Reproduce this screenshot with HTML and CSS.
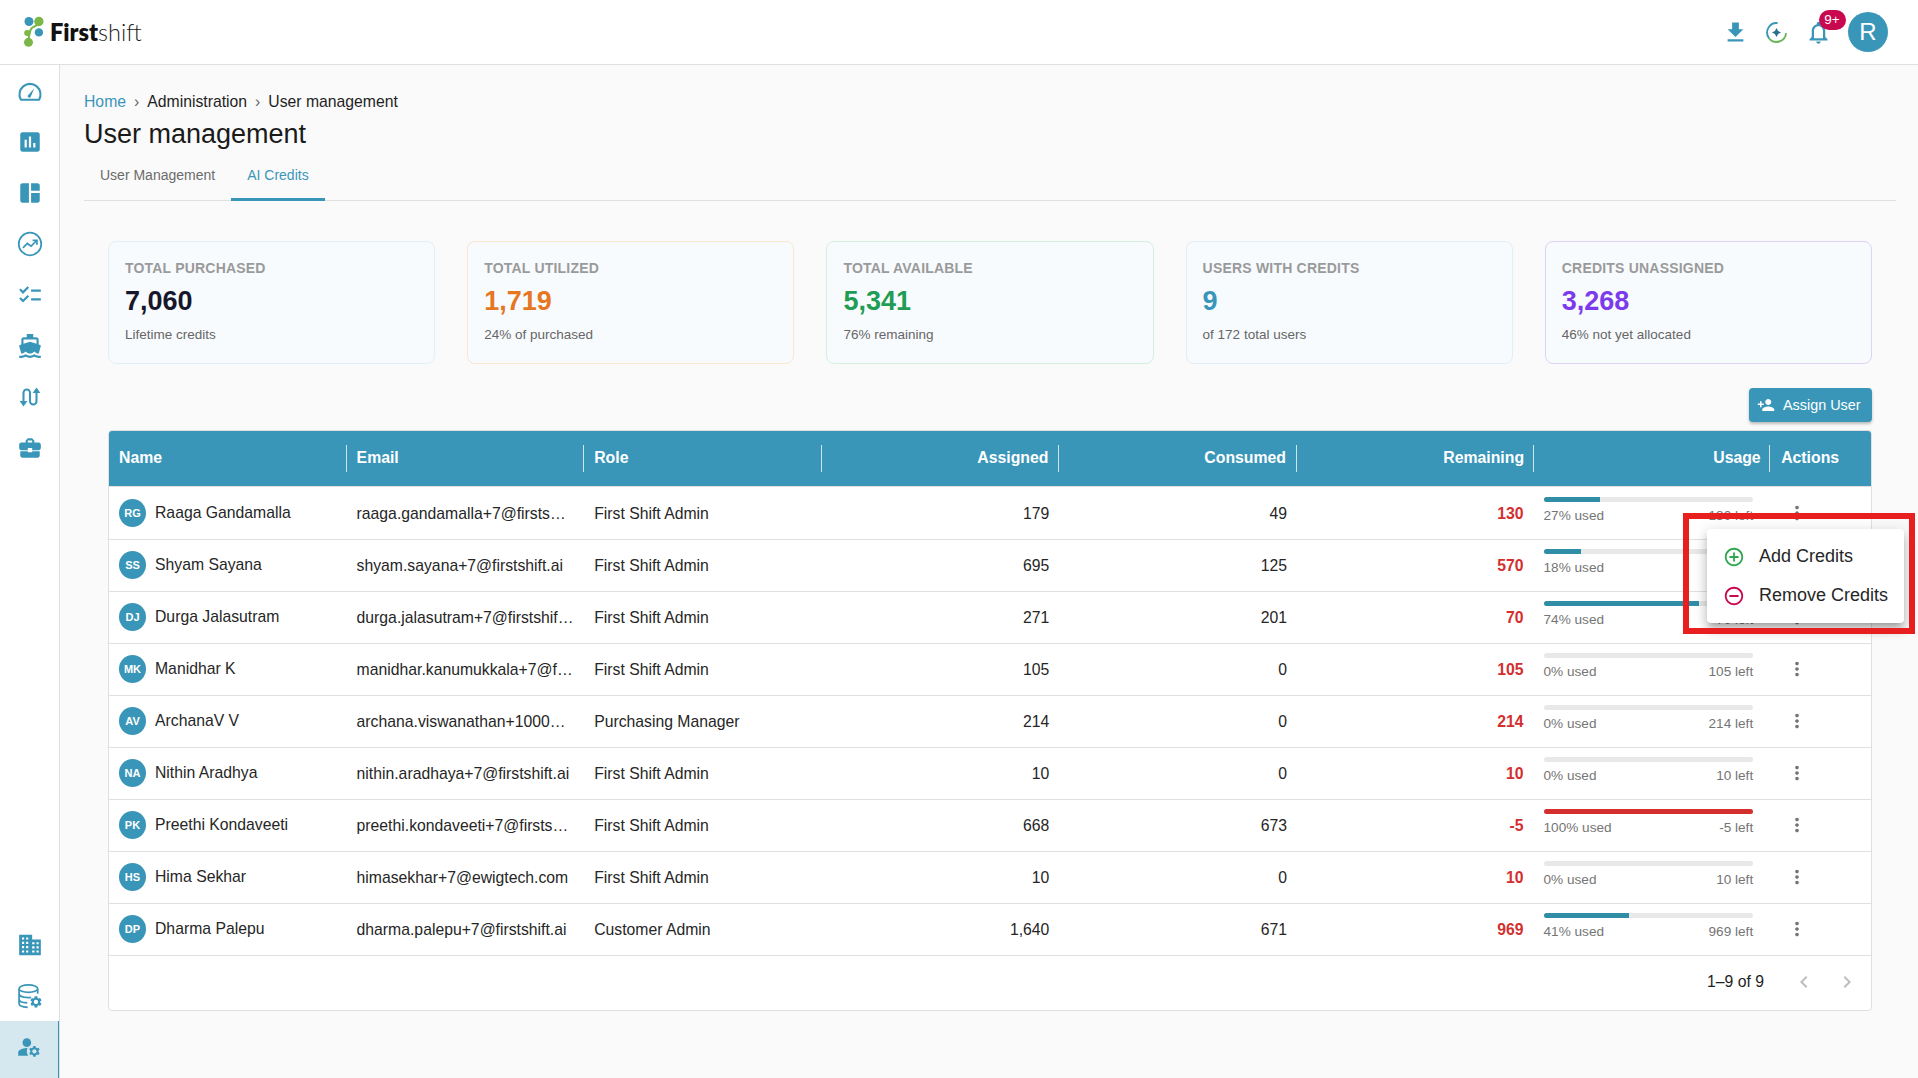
FILE: index.html
```html
<!DOCTYPE html>
<html lang="en">
<head>
<meta charset="utf-8">
<title>User management</title>
<link rel="stylesheet" href="styles.css">
</head>
<body>
<svg class="defs" aria-hidden="true">
  <symbol id="gear" viewBox="0 0 24 24"><path d="M19.14 12.94c.04-.3.06-.61.06-.94 0-.32-.02-.64-.07-.94l2.03-1.58c.18-.14.23-.41.12-.61l-1.92-3.32c-.12-.22-.37-.29-.59-.22l-2.39.96c-.5-.38-1.03-.7-1.62-.94l-.36-2.54c-.04-.24-.24-.41-.48-.41h-3.84c-.24 0-.43.17-.47.41l-.36 2.54c-.59.24-1.13.57-1.62.94l-2.39-.96c-.22-.08-.47 0-.59.22L2.74 8.87c-.12.21-.08.47.12.61l2.03 1.58c-.05.3-.09.63-.09.94s.02.64.07.94l-2.03 1.58c-.18.14-.23.41-.12.61l1.92 3.32c.12.22.37.29.59.22l2.39-.96c.5.38 1.03.7 1.62.94l.36 2.54c.05.24.24.41.48.41h3.84c.24 0 .44-.17.47-.41l.36-2.54c.59-.24 1.13-.56 1.62-.94l2.39.96c.22.08.47 0 .59-.22l1.92-3.32c.12-.22.07-.47-.12-.61l-2.01-1.58zM12 15.6c-1.98 0-3.6-1.62-3.6-3.6s1.62-3.6 3.6-3.6 3.6 1.62 3.6 3.6-1.62 3.6-3.6 3.6z"/></symbol>
  <symbol id="more" viewBox="0 0 24 24"><path d="M12 8c1.1 0 2-.9 2-2s-.9-2-2-2-2 .9-2 2 .9 2 2 2zm0 2c-1.1 0-2 .9-2 2s.9 2 2 2 2-.9 2-2-.9-2-2-2zm0 6c-1.1 0-2 .9-2 2s.9 2 2 2 2-.9 2-2-.9-2-2-2z"/></symbol>
</svg>

<header class="topbar">
  <div class="logo">
    <svg class="logo-mark" viewBox="0 0 22 32">
      <path d="M15.5 5.5C15 11 9 9 7 13.5 5.8 16.5 5 20 4.6 27" stroke="#7ab648" stroke-width="2.2" fill="none"/>
      <circle cx="5.2" cy="5" r="4.7" fill="#3a96b8"/>
      <circle cx="15.6" cy="5" r="4.9" fill="#7ab648"/>
      <circle cx="15.6" cy="16.4" r="4.4" fill="#3a96b8"/>
      <circle cx="3.4" cy="17" r="3.2" fill="#7ab648"/>
      <circle cx="4.7" cy="26.8" r="4.7" fill="#7ab648"/>
    </svg>
    <span class="logo-text"><b>First</b>shift</span>
  </div>
  <div class="top-actions">
    <svg class="top-icon" viewBox="0 0 24 24"><path d="M5 20h14v-2H5v2zM19 9h-4V3H9v6H5l7 7 7-7z"/></svg>
    <svg class="top-icon ring" viewBox="0 0 24 24">
      <path class="ring-blue" d="M13 3.6a8.5 8.5 0 0 0-7.6 13.6"/>
      <path class="ring-green" d="M5.4 17.2a8.5 8.5 0 0 0 15.1-4.6"/>
      <path class="ring-star" d="M12 8 L13.4 10.6 L16 12 L13.4 13.4 L12 16 L10.6 13.4 L8 12 L10.6 10.6 Z"/>
    </svg>
    <div class="bell">
      <svg class="top-icon" viewBox="0 0 24 24"><path d="M12 22c1.1 0 2-.9 2-2h-4c0 1.1.9 2 2 2zm6-6v-5c0-3.07-1.63-5.64-4.5-6.32V4c0-.83-.67-1.5-1.5-1.5s-1.5.67-1.5 1.5v.68C7.64 5.36 6 7.92 6 11v5l-2 2v1h16v-1l-2-2zm-2 1H8v-6c0-2.48 1.51-4.5 4-4.5s4 2.02 4 4.5v6z"/></svg>
      <span class="badge">9+</span>
    </div>
    <div class="account">R</div>
  </div>
</header>

<div class="shell">
  <nav class="sidebar">
    <div class="nav-group">
      <a class="nav-item"><svg class="stroked" viewBox="0 0 24 24" stroke-width="1.9"><path d="M3.6 20A9.7 9.7 0 1 1 20.4 20Z" stroke-linejoin="round"/><path class="solid" d="M9.8 16.4 16 9.4 12.6 17.6a1.6 1.6 0 0 1-2.8-1.2z"/></svg></a>
      <a class="nav-item"><svg viewBox="0 0 24 24"><path d="M19 3H5c-1.1 0-2 .9-2 2v14c0 1.1.9 2 2 2h14c1.1 0 2-.9 2-2V5c0-1.1-.9-2-2-2zM9 17H7v-7h2v7zm4 0h-2V7h2v10zm4 0h-2v-4h2v4z"/></svg></a>
      <a class="nav-item"><svg viewBox="0 0 24 24"><path d="M11 21H5c-1.1 0-2-.9-2-2V5c0-1.1.9-2 2-2h6v18zm2 0h6c1.1 0 2-.9 2-2v-7h-8v9zm8-11V5c0-1.1-.9-2-2-2h-6v7h8z"/></svg></a>
      <a class="nav-item"><svg class="stroked" viewBox="0 0 24 24" stroke-width="1.6"><circle cx="12" cy="12" r="10.4"/><path d="M5.5 15.5 9.5 11.5 13 14 18 9"/><path d="M14.4 8.6H18.4V12.6"/></svg></a>
      <a class="nav-item"><svg viewBox="0 0 24 24"><path d="M22 7h-9v2h9V7zm0 8h-9v2h9v-2zM5.54 11 2 7.46l1.41-1.41 2.12 2.12 4.24-4.24 1.41 1.41L5.54 11zm0 8L2 15.46l1.41-1.41 2.12 2.12 4.24-4.24 1.41 1.41L5.54 19z"/></svg></a>
      <a class="nav-item"><svg viewBox="0 0 24 24"><path d="M20 21c-1.39 0-2.78-.47-4-1.32-2.44 1.71-5.56 1.71-8 0C6.78 20.53 5.39 21 4 21H2v2h2c1.38 0 2.74-.35 4-.99 2.52 1.29 5.48 1.29 8 0 1.26.65 2.62.99 4 .99h2v-2h-2zM3.95 19H4c1.6 0 3.02-.88 4-2 .98 1.12 2.4 2 4 2s3.02-.88 4-2c.98 1.12 2.4 2 4 2h.05l1.89-6.68c.08-.26.06-.54-.06-.78s-.34-.42-.6-.5L20 10.62V6c0-1.1-.9-2-2-2h-3V1H9v3H6c-1.1 0-2 .9-2 2v4.62l-1.29.42c-.26.08-.48.26-.6.5s-.15.52-.06.78L3.95 19zM6 6h12v3.97L12 8 6 9.97V6z"/></svg></a>
      <a class="nav-item"><svg class="stroked" viewBox="0 0 24 24" stroke-width="1.9"><path d="M6 17V8a3 3 0 0 1 6 0v8a3 3 0 0 0 6 0V7"/><path class="solid" stroke="none" d="M2.4 15.6H9.6L6 20.8zM14.4 8.4H21.6L18 3.2z"/></svg></a>
      <a class="nav-item"><svg viewBox="0 0 24 24"><path d="M10 16v-1H3.01L3 19c0 1.11.89 2 2 2h14c1.11 0 2-.89 2-2v-4h-7v1h-4zm10-9h-4.01V5l-2-2h-4l-2 2v2H4c-1.1 0-2 .9-2 2v3c0 1.11.89 2 2 2h6v-2h4v2h6c1.1 0 2-.9 2-2V9c0-1.1-.9-2-2-2zm-6 0h-4V5h4v2z"/></svg></a>
    </div>
    <div class="nav-group">
      <a class="nav-item"><svg viewBox="0 0 24 24"><path fill-rule="evenodd" d="M2 2.5H14V7H22V21.5H2zM4.6 5v2h2V5zM8.4 5v2h2V5zM4.6 9v2h2V9zM8.4 9v2h2V9zM4.6 13v2h2v-2zM8.4 13v2h2v-2zM4.6 17v2h2v-2zM8.4 17v2h2v-2zM14 9.4v2h2.2v-2zM18 9.4v2h2v-2zM14 13.2v2h2.2v-2zM18 13.2v2h2v-2zM14 17v2h2.2v-2zM18 17v2h2v-2z"/></svg></a>
      <a class="nav-item"><svg class="stroked" viewBox="0 0 24 24" stroke-width="1.6"><ellipse cx="10.5" cy="5.2" rx="8.6" ry="3.4"/><path d="M1.9 5.2V19c0 2 3.4 3.3 8 3.4M19.1 5.2V10M1.9 10c0 2 3.8 3.4 8.6 3.4 1 0 1.6 0 2.4-.2M1.9 15c0 2 3.4 3.2 7.6 3.4"/><use class="solid" href="#gear" x="11" y="11" width="13" height="13" stroke="none"/></svg></a>
      <a class="nav-item is-active"><svg viewBox="0 0 24 24"><circle cx="10" cy="8" r="4"/><path d="M10.67 13.02c-.22-.01-.44-.02-.67-.02-2.42 0-4.68.67-6.61 1.82-.88.52-1.39 1.5-1.39 2.53V20h9.26c-.79-1.13-1.26-2.51-1.26-4 0-1.07.25-2.07.67-2.98zM20.75 16c0-.22-.03-.42-.06-.63l1.14-1.01-1-1.73-1.45.49c-.32-.27-.68-.48-1.08-.63L18 11h-2l-.3 1.49c-.4.15-.76.36-1.08.63l-1.45-.49-1 1.73 1.14 1.01c-.03.21-.06.41-.06.63s.03.42.06.63l-1.14 1.01 1 1.73 1.45-.49c.32.27.68.48 1.08.63L16 21h2l.3-1.49c.4-.15.76-.36 1.08-.63l1.45.49 1-1.73-1.14-1.01c.03-.21.06-.41.06-.63zM17 18c-1.1 0-2-.9-2-2s.9-2 2-2 2 .9 2 2-.9 2-2 2z"/></svg></a>
    </div>
  </nav>

  <main class="content">
    <div class="crumbs"><a class="crumb-link">Home</a><span class="sep">›</span><span>Administration</span><span class="sep">›</span><span>User management</span></div>
    <h1 class="title">User management</h1>
    <div class="tabs">
      <div class="tab">User Management</div>
      <div class="tab is-active">AI Credits</div>
    </div>

    <section class="panel">
      <div class="cards">
        <div class="card card-blue"><div class="card-label">TOTAL PURCHASED</div><div class="card-value v-dark">7,060</div><div class="card-sub">Lifetime credits</div></div>
        <div class="card card-orange"><div class="card-label">TOTAL UTILIZED</div><div class="card-value v-orange">1,719</div><div class="card-sub">24% of purchased</div></div>
        <div class="card card-green"><div class="card-label">TOTAL AVAILABLE</div><div class="card-value v-green">5,341</div><div class="card-sub">76% remaining</div></div>
        <div class="card card-blue"><div class="card-label">USERS WITH CREDITS</div><div class="card-value v-teal">9</div><div class="card-sub">of 172 total users</div></div>
        <div class="card card-purple"><div class="card-label">CREDITS UNASSIGNED</div><div class="card-value v-purple">3,268</div><div class="card-sub">46% not yet allocated</div></div>
      </div>

      <div class="toolbar">
        <button class="assign"><svg viewBox="0 0 24 24"><path d="M15 12c2.21 0 4-1.79 4-4s-1.79-4-4-4-4 1.79-4 4 1.79 4 4 4zm-9-2V7H4v3H1v2h3v3h2v-3h3v-2H6zm9 4c-2.67 0-8 1.34-8 4v2h16v-2c0-2.66-5.33-4-8-4z"/></svg>Assign User</button>
      </div>

      <div class="table">
        <div class="row head">
          <div class="th">Name</div><div class="th">Email</div><div class="th">Role</div>
          <div class="th num">Assigned</div><div class="th num">Consumed</div><div class="th num tight">Remaining</div>
          <div class="th num tight">Usage</div><div class="th last">Actions</div>
        </div>

        <div class="row">
          <div class="td name"><span class="avatar">RG</span>Raaga Gandamalla</div><div class="td"><span class="clip">raaga.gandamalla+7@firstshift.ai</span></div><div class="td">First Shift Admin</div>
          <div class="td num">179</div><div class="td num">49</div><div class="td num rem">130</div>
          <div class="td usage"><div class="track"><div class="fill" style="width:27%"></div></div><div class="meta"><span>27% used</span><span>130 left</span></div></div>
          <div class="td act"><svg class="dots"><use href="#more"/></svg></div>
        </div>
        <div class="row">
          <div class="td name"><span class="avatar">SS</span>Shyam Sayana</div><div class="td"><span class="clip">shyam.sayana+7@firstshift.ai</span></div><div class="td">First Shift Admin</div>
          <div class="td num">695</div><div class="td num">125</div><div class="td num rem">570</div>
          <div class="td usage"><div class="track"><div class="fill" style="width:18%"></div></div><div class="meta"><span>18% used</span><span>570 left</span></div></div>
          <div class="td act"><svg class="dots"><use href="#more"/></svg></div>
        </div>
        <div class="row">
          <div class="td name"><span class="avatar">DJ</span>Durga Jalasutram</div><div class="td"><span class="clip">durga.jalasutram+7@firstshift.ai</span></div><div class="td">First Shift Admin</div>
          <div class="td num">271</div><div class="td num">201</div><div class="td num rem">70</div>
          <div class="td usage"><div class="track"><div class="fill" style="width:74%"></div></div><div class="meta"><span>74% used</span><span>70 left</span></div></div>
          <div class="td act"><svg class="dots"><use href="#more"/></svg></div>
        </div>
        <div class="row">
          <div class="td name"><span class="avatar">MK</span>Manidhar K</div><div class="td"><span class="clip">manidhar.kanumukkala+7@firstshift.ai</span></div><div class="td">First Shift Admin</div>
          <div class="td num">105</div><div class="td num">0</div><div class="td num rem">105</div>
          <div class="td usage"><div class="track"></div><div class="meta"><span>0% used</span><span>105 left</span></div></div>
          <div class="td act"><svg class="dots"><use href="#more"/></svg></div>
        </div>
        <div class="row">
          <div class="td name"><span class="avatar">AV</span>ArchanaV V</div><div class="td"><span class="clip">archana.viswanathan+1000@firstshift.ai</span></div><div class="td">Purchasing Manager</div>
          <div class="td num">214</div><div class="td num">0</div><div class="td num rem">214</div>
          <div class="td usage"><div class="track"></div><div class="meta"><span>0% used</span><span>214 left</span></div></div>
          <div class="td act"><svg class="dots"><use href="#more"/></svg></div>
        </div>
        <div class="row">
          <div class="td name"><span class="avatar">NA</span>Nithin Aradhya</div><div class="td"><span class="clip">nithin.aradhaya+7@firstshift.ai</span></div><div class="td">First Shift Admin</div>
          <div class="td num">10</div><div class="td num">0</div><div class="td num rem">10</div>
          <div class="td usage"><div class="track"></div><div class="meta"><span>0% used</span><span>10 left</span></div></div>
          <div class="td act"><svg class="dots"><use href="#more"/></svg></div>
        </div>
        <div class="row">
          <div class="td name"><span class="avatar">PK</span>Preethi Kondaveeti</div><div class="td"><span class="clip">preethi.kondaveeti+7@firstshift.ai</span></div><div class="td">First Shift Admin</div>
          <div class="td num">668</div><div class="td num">673</div><div class="td num rem">-5</div>
          <div class="td usage"><div class="track"><div class="fill fill-over" style="width:100%"></div></div><div class="meta"><span>100% used</span><span>-5 left</span></div></div>
          <div class="td act"><svg class="dots"><use href="#more"/></svg></div>
        </div>
        <div class="row">
          <div class="td name"><span class="avatar">HS</span>Hima Sekhar</div><div class="td"><span class="clip">himasekhar+7@ewigtech.com</span></div><div class="td">First Shift Admin</div>
          <div class="td num">10</div><div class="td num">0</div><div class="td num rem">10</div>
          <div class="td usage"><div class="track"></div><div class="meta"><span>0% used</span><span>10 left</span></div></div>
          <div class="td act"><svg class="dots"><use href="#more"/></svg></div>
        </div>
        <div class="row">
          <div class="td name"><span class="avatar">DP</span>Dharma Palepu</div><div class="td"><span class="clip">dharma.palepu+7@firstshift.ai</span></div><div class="td">Customer Admin</div>
          <div class="td num">1,640</div><div class="td num">671</div><div class="td num rem">969</div>
          <div class="td usage"><div class="track"><div class="fill" style="width:41%"></div></div><div class="meta"><span>41% used</span><span>969 left</span></div></div>
          <div class="td act"><svg class="dots"><use href="#more"/></svg></div>
        </div>

        <div class="pager">
          <span class="pager-text">1–9 of 9</span>
          <svg class="pager-btn" viewBox="0 0 24 24"><path d="M15.41 7.41 14 6l-6 6 6 6 1.41-1.41L10.83 12z"/></svg>
          <svg class="pager-btn" viewBox="0 0 24 24"><path d="M10 6 8.59 7.41 13.17 12l-4.58 4.59L10 18l6-6z"/></svg>
        </div>
      </div>
    </section>
  </main>
</div>

<div class="menu">
  <div class="menu-item"><svg class="ic-add" viewBox="0 0 24 24"><path d="M13 7h-2v4H7v2h4v4h2v-4h4v-2h-4V7zm-1-5C6.48 2 2 6.48 2 12s4.48 10 10 10 10-4.48 10-10S17.52 2 12 2zm0 18c-4.41 0-8-3.59-8-8s3.59-8 8-8 8 3.59 8 8-3.59 8-8 8z"/></svg>Add Credits</div>
  <div class="menu-item"><svg class="ic-remove" viewBox="0 0 24 24"><path d="M7 11v2h10v-2H7zm5-9C6.48 2 2 6.48 2 12s4.48 10 10 10 10-4.48 10-10S17.52 2 12 2zm0 18c-4.41 0-8-3.59-8-8s3.59-8 8-8 8 3.59 8 8-3.59 8-8 8z"/></svg>Remove Credits</div>
</div>
<div class="annotation"></div>
</body>
</html>
```

FILE: styles.css
```css
* { box-sizing: border-box; }
html, body { height: 100%; }
body {
  margin: 0;
  height: 1078px;
  overflow: hidden;
  background: #fafafa;
  color: #1f1f1f;
  font-family: "Liberation Sans", Arial, sans-serif;
  font-size: 16px;
}
.defs { position: absolute; width: 0; height: 0; }

.topbar {
  height: 65px;
  background: #fff;
  border-bottom: 1px solid #e0e0e0;
  display: flex;
  align-items: center;
  justify-content: space-between;
  padding: 0 30px 0 24px;
}
.logo { display: flex; align-items: center; gap: 5px; }
.logo-mark { width: 21px; height: 32px; margin-bottom: 1px; }
.logo-text {
  font-family: "Lato", sans-serif;
  font-size: 23.5px;
  font-weight: 300;
  color: #1c1c1c;
}
.logo-text b { font-weight: 800; color: #111; }
.top-actions { display: flex; align-items: center; }
.top-icon { width: 27px; height: 27px; fill: #3a96b8; display: block; margin-right: 14.5px; }
.bell { position: relative; margin-right: 3px; }
.bell .top-icon { margin-right: 13.5px; }
.ring { fill: none; }
.ring-blue { stroke: #3a96b8; stroke-width: 1.7; }
.ring-green { stroke: #6cb65a; stroke-width: 1.7; }
.ring-star { fill: #2b6f8d; }
.badge {
  position: absolute;
  top: -9px;
  left: 14px;
  width: 27px;
  height: 20px;
  border-radius: 10px;
  background: #c8084f;
  color: #fff;
  font-size: 13.5px;
  line-height: 20px;
  text-align: center;
}
.account {
  width: 40px;
  height: 40px;
  border-radius: 50%;
  background: #3a96b8;
  color: #fff;
  font-size: 24px;
  line-height: 40px;
  text-align: center;
}

.shell { display: flex; height: 1013px; }
.sidebar {
  width: 60px;
  flex: none;
  background: #fff;
  border-right: 1px solid #e0e0e0;
  display: flex;
  flex-direction: column;
  justify-content: space-between;
}
.nav-group { display: flex; flex-direction: column; }
.nav-item {
  height: 51px;
  display: flex;
  align-items: center;
  justify-content: center;
  color: #3a96b8;
}
.nav-item svg { width: 26px; height: 26px; fill: currentColor; }
.nav-item svg.stroked { fill: none; stroke: currentColor; }
.nav-item svg.stroked .solid { fill: currentColor; stroke: none; }
.nav-item.is-active {
  height: 57px;
  padding-bottom: 6px;
  background: #d6e8ef;
  border-right: 1px solid #3a96b8;
}

.content { flex: 1; min-width: 0; padding: 27px 22px 0 24px; }
.crumbs {
  display: flex;
  align-items: center;
  font-size: 15.75px;
  line-height: 19px;
  height: 19px;
  color: #1f1f1f;
}
.crumb-link { color: #3a96b8; }
.sep { margin: 0 8px; color: #666; }
.title {
  margin: 5px 0 0;
  font-size: 27px;
  line-height: 36px;
  font-weight: 400;
  color: #1a1a1a;
}
.tabs {
  display: flex;
  margin-top: 3px;
  height: 46px;
  border-bottom: 1px solid #e0e0e0;
}
.tab {
  padding: 0 16px;
  font-size: 14px;
  line-height: 41px;
  color: #6b6b6b;
  height: 46px;
}
.tab.is-active { color: #3a96b8; border-bottom: 3px solid #3a96b8; }

.panel { padding: 40px 0 0 24px; width: 1788px; }
.cards { display: grid; grid-template-columns: repeat(5, 1fr); gap: 32px; }
.card {
  height: 123px;
  border: 1px solid;
  border-radius: 8px;
  padding: 18px 16px 0;
  background: #f8fbfe;
}
.card-blue { border-color: #e3eff6; }
.card-orange { border-color: #fbe6cf; }
.card-green { border-color: #d3f0df; }
.card-purple { border-color: #ddd3f5; }
.card-label {
  font-size: 14px;
  line-height: 17px;
  font-weight: 700;
  color: #9a9a9a;
  letter-spacing: 0.2px;
}
.card-value {
  margin-top: 7px;
  font-size: 27px;
  line-height: 34px;
  font-weight: 700;
}
.v-dark { color: #17172b; }
.v-orange { color: #e67722; }
.v-green { color: #1f9d55; }
.v-teal { color: #3a96b8; }
.v-purple { color: #7c3aed; }
.card-sub {
  margin-top: 8px;
  font-size: 13.5px;
  line-height: 18px;
  color: #666;
}

.toolbar { display: flex; justify-content: flex-end; margin-top: 24px; height: 34px; }
.assign {
  display: flex;
  align-items: center;
  gap: 8px;
  height: 34px;
  width: 123px;
  padding: 0 0 0 8px;
  border: 0;
  border-radius: 4px;
  background: #3a96b8;
  color: #fff;
  font-family: inherit;
  font-size: 14.4px;
  box-shadow: 0 2px 3px rgba(0,0,0,.25);
}
.assign svg { width: 18px; height: 18px; fill: #fff; }

.table {
  margin-top: 8px;
  background: #fff;
  border: 1px solid #e0e0e0;
  border-radius: 4px;
  overflow: hidden;
}
.row {
  display: grid;
  grid-template-columns: 238fr 238fr 238fr 238fr 238fr 237fr 237fr 101fr;
  height: 52px;
  border-bottom: 1px solid #e0e0e0;
}
.head {
  height: 56px;
  margin-bottom: 1px;
  background: #3a96b8;
  align-items: center;
}
.th {
  height: 27px;
  padding: 0 10px;
  border-right: 1px solid rgba(255,255,255,.75);
  color: #fff;
  font-size: 15.8px;
  line-height: 25px;
  font-weight: 700;
}
.th.num { text-align: right; }
.th.tight { padding-right: 8.5px; }
.th.last { border-right: 0; padding-left: 11px; }
.td {
  padding: 0 10px;
  display: flex;
  align-items: center;
  font-size: 15.75px;
  color: #262626;
  min-width: 0;
  white-space: nowrap;
}
.clip { display: block; min-width: 0; overflow: hidden; text-overflow: ellipsis; }
.td.num { justify-content: flex-end; }
.td.rem { color: #d32f2f; font-weight: 700; }
.name { gap: 9px; padding-bottom: 2px; }
.avatar {
  flex: none;
  width: 27px;
  height: 28px;
  border-radius: 50%;
  background: #3a96b8;
  color: #fff;
  font-size: 11px;
  font-weight: 700;
  line-height: 28px;
  text-align: center;
}
.usage { display: block; padding: 9px 17px 0 10px; }
.track { height: 5px; border-radius: 3px; background: #e8e8e8; overflow: hidden; }
.fill { height: 100%; background: #2f8ea6; }
.fill-over { background: #d32f2f; }
.meta {
  display: flex;
  justify-content: space-between;
  margin-top: 5px;
  font-size: 13.6px;
  line-height: 18px;
  color: #757575;
}
.act { padding: 0 0 1px 16px; }
.dots { width: 22px; height: 22px; fill: #757575; }

.pager {
  height: 54px;
  display: flex;
  align-items: center;
  justify-content: flex-end;
  padding: 0 12px 2px 0;
}
.pager-text { font-size: 15.75px; color: #1f1f1f; margin-right: 28px; }
.pager-btn { width: 24px; height: 24px; fill: #bdbdbd; }
.pager-btn + .pager-btn { margin-left: 19px; }

.menu {
  position: absolute;
  left: 1707px;
  top: 529px;
  width: 197px;
  height: 94px;
  padding: 8px 0;
  background: #fff;
  border-radius: 4px;
  box-shadow: 0 5px 5px -3px rgba(0,0,0,.2), 0 8px 10px 1px rgba(0,0,0,.14), 0 3px 14px 2px rgba(0,0,0,.12);
}
.menu-item {
  height: 39px;
  display: flex;
  align-items: center;
  gap: 14px;
  padding-left: 16px;
  font-size: 18px;
  color: #262626;
  white-space: nowrap;
}
.menu-item svg { width: 22px; height: 22px; flex: none; }
.ic-add { fill: #2fa84f; }
.ic-remove { fill: #c8084f; }
.annotation {
  position: absolute;
  left: 1683px;
  top: 513px;
  width: 232px;
  height: 121px;
  border: 6px solid #e81f1f;
}
```
